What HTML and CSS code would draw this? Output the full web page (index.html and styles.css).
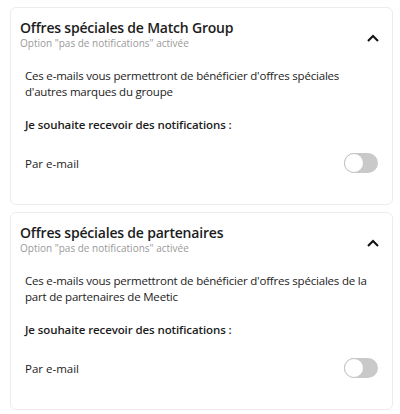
FILE: index.html
```html
<!DOCTYPE html>
<html lang="fr">
<head>
<meta charset="utf-8">
<link rel="stylesheet" href="styles.css">
</head>
<body>
<div class="list">
  <div class="card card-prev"></div>
  <section class="card">
    <header class="head">
      <div class="head-text">
        <h2 class="title">Offres spéciales de Match Group</h2>
        <p class="sub">Option "pas de notifications" activée</p>
      </div>
      <svg class="chev" width="12" height="8" viewBox="0 0 12 8"><path d="M1 7 L6 2 L11 7" fill="none" stroke="#111" stroke-width="2"/></svg>
    </header>
    <div class="body">
      <p class="desc">Ces e-mails vous permettront de bénéficier d'offres spéciales d'autres marques du groupe</p>
      <p class="label">Je souhaite recevoir des notifications :</p>
      <div class="row">
        <span class="row-text">Par e-mail</span>
        <span class="toggle"><span class="knob"></span></span>
      </div>
    </div>
  </section>
  <section class="card">
    <header class="head">
      <div class="head-text">
        <h2 class="title">Offres spéciales de partenaires</h2>
        <p class="sub">Option "pas de notifications" activée</p>
      </div>
      <svg class="chev" width="12" height="8" viewBox="0 0 12 8"><path d="M1 7 L6 2 L11 7" fill="none" stroke="#111" stroke-width="2"/></svg>
    </header>
    <div class="body">
      <p class="desc">Ces e-mails vous permettront de bénéficier d'offres spéciales de la part de partenaires de Meetic</p>
      <p class="label">Je souhaite recevoir des notifications :</p>
      <div class="row">
        <span class="row-text">Par e-mail</span>
        <span class="toggle"><span class="knob"></span></span>
      </div>
    </div>
  </section>
</div>
</body>
</html>
```
FILE: styles.css
```css
* { box-sizing: border-box; }
html, body { margin: 0; padding: 0; background: #fff; }
body {
  font-family: "Open Sans", "Noto Sans", sans-serif;
  color: #1c1c1c;
  width: 400px;
  height: 414px;
  overflow: hidden;
}
.list {
  display: flex;
  flex-direction: column;
  gap: 7px;
  padding: 0 7px 0 10px;
  margin-top: -21px;
}
.card {
  border: 1px solid #ececec;
  border-radius: 6px;
  background: #fff;
}
.card-prev { height: 21px; }
.head {
  display: flex;
  align-items: flex-start;
  justify-content: space-between;
  padding: 11px 13px 0 9px;
}
.title {
  margin: 0;
  font-size: 14px;
  font-weight: 600;
  line-height: 18px;
  letter-spacing: -0.2px;
}
.sub {
  margin: 0;
  font-size: 10px;
  line-height: 12px;
  color: #9a9a9a;
}
.chev { margin-top: 15px; }
.body { padding: 19px 14px 0 14px; }
.desc {
  margin: 0;
  font-size: 11.5px;
  line-height: 15.5px;
  letter-spacing: -0.2px;
}
.label {
  margin: 18px 0 0;
  font-size: 11.5px;
  font-weight: 600;
  line-height: 16px;
  letter-spacing: -0.1px;
}
.row {
  display: flex;
  align-items: center;
  justify-content: space-between;
  margin-top: 20px;
  padding-bottom: 31px;
}
.row-text { font-size: 11.5px; line-height: 17px; }
.toggle {
  width: 34px;
  height: 20px;
  border-radius: 10px;
  background: #c9c9c9;
  display: flex;
  align-items: center;
}
.knob {
  width: 20px;
  height: 20px;
  border-radius: 50%;
  background: #fff;
  border: 1px solid #c4c4c4;
}
```
